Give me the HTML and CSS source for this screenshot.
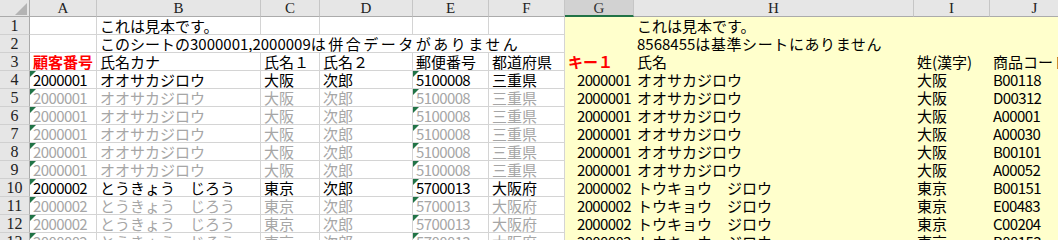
FILE: index.html
```html
<!DOCTYPE html>
<html lang="ja">
<head>
    <meta charset="utf-8">
    <title>Sheet</title>
    <link rel="stylesheet" href="styles.css">
</head>
<body>
    <div class="sheet">
        <!-- column headers -->
        <div class="corner">
            <svg width="30" height="16" viewBox="0 0 30 16"><polygon points="15,15 27,15 27,3" fill="#b4b4b4"/></svg>
        </div>
        <div class="ch">A</div>
        <div class="ch">B</div>
        <div class="ch">C</div>
        <div class="ch">D</div>
        <div class="ch">E</div>
        <div class="ch">F</div>
        <div class="ch sel">G</div>
        <div class="ch">H</div>
        <div class="ch">I</div>
        <div class="ch">J</div>

        <!-- 1 -->
        <div class="rh">1</div>
        <div class="c"></div>
        <div class="c">これは見本です。</div>
        <div class="c"></div><div class="c"></div><div class="c"></div><div class="c"></div>
        <div class="y"></div>
        <div class="y">これは見本です。</div>
        <div class="y"></div><div class="y"></div>

        <!-- 2 -->
        <div class="rh">2</div>
        <div class="c"></div>
        <div class="c span5">このシートの3000001,2000009<span class="wide">は併合データがありません</span></div>
        <div class="y"></div>
        <div class="y span2">8568455<span class="wide-s">は基準シートにありません</span></div>
        <div class="y"></div>

        <!-- 3 -->
        <div class="rh">3</div>
        <div class="c key">顧客番号</div>
        <div class="c">氏名カナ</div>
        <div class="c">氏名１</div>
        <div class="c">氏名２</div>
        <div class="c">郵便番号</div>
        <div class="c">都道府県</div>
        <div class="y key">キー１</div>
        <div class="y">氏名</div>
        <div class="y">姓(漢字)</div>
        <div class="y">商品コード</div>

        <!-- 4 -->
        <div class="rh">4</div>
        <div class="c t n">2000001</div>
        <div class="c">オオサカジロウ</div>
        <div class="c">大阪</div>
        <div class="c">次郎</div>
        <div class="c t n">5100008</div>
        <div class="c">三重県</div>
        <div class="y r n">2000001</div>
        <div class="y">オオサカジロウ</div>
        <div class="y">大阪</div>
        <div class="y n">B00118</div>

        <!-- 5 -->
        <div class="rh">5</div>
        <div class="c g t n">2000001</div>
        <div class="c g">オオサカジロウ</div>
        <div class="c g">大阪</div>
        <div class="c g">次郎</div>
        <div class="c g t n">5100008</div>
        <div class="c g">三重県</div>
        <div class="y r n">2000001</div>
        <div class="y">オオサカジロウ</div>
        <div class="y">大阪</div>
        <div class="y n">D00312</div>

        <!-- 6 -->
        <div class="rh">6</div>
        <div class="c g t n">2000001</div>
        <div class="c g">オオサカジロウ</div>
        <div class="c g">大阪</div>
        <div class="c g">次郎</div>
        <div class="c g t n">5100008</div>
        <div class="c g">三重県</div>
        <div class="y r n">2000001</div>
        <div class="y">オオサカジロウ</div>
        <div class="y">大阪</div>
        <div class="y n">A00001</div>

        <!-- 7 -->
        <div class="rh">7</div>
        <div class="c g t n">2000001</div>
        <div class="c g">オオサカジロウ</div>
        <div class="c g">大阪</div>
        <div class="c g">次郎</div>
        <div class="c g t n">5100008</div>
        <div class="c g">三重県</div>
        <div class="y r n">2000001</div>
        <div class="y">オオサカジロウ</div>
        <div class="y">大阪</div>
        <div class="y n">A00030</div>

        <!-- 8 -->
        <div class="rh">8</div>
        <div class="c g t n">2000001</div>
        <div class="c g">オオサカジロウ</div>
        <div class="c g">大阪</div>
        <div class="c g">次郎</div>
        <div class="c g t n">5100008</div>
        <div class="c g">三重県</div>
        <div class="y r n">2000001</div>
        <div class="y">オオサカジロウ</div>
        <div class="y">大阪</div>
        <div class="y n">B00101</div>

        <!-- 9 -->
        <div class="rh">9</div>
        <div class="c g t n">2000001</div>
        <div class="c g">オオサカジロウ</div>
        <div class="c g">大阪</div>
        <div class="c g">次郎</div>
        <div class="c g t n">5100008</div>
        <div class="c g">三重県</div>
        <div class="y r n">2000001</div>
        <div class="y">オオサカジロウ</div>
        <div class="y">大阪</div>
        <div class="y n">A00052</div>

        <!-- 10 -->
        <div class="rh">10</div>
        <div class="c t n">2000002</div>
        <div class="c">とうきょう　じろう</div>
        <div class="c">東京</div>
        <div class="c">次郎</div>
        <div class="c t n">5700013</div>
        <div class="c">大阪府</div>
        <div class="y r n">2000002</div>
        <div class="y">トウキョウ　ジロウ</div>
        <div class="y">東京</div>
        <div class="y n">B00151</div>

        <!-- 11 -->
        <div class="rh">11</div>
        <div class="c g t n">2000002</div>
        <div class="c g">とうきょう　じろう</div>
        <div class="c g">東京</div>
        <div class="c g">次郎</div>
        <div class="c g t n">5700013</div>
        <div class="c g">大阪府</div>
        <div class="y r n">2000002</div>
        <div class="y">トウキョウ　ジロウ</div>
        <div class="y">東京</div>
        <div class="y n">E00483</div>

        <!-- 12 -->
        <div class="rh">12</div>
        <div class="c g t n">2000002</div>
        <div class="c g">とうきょう　じろう</div>
        <div class="c g">東京</div>
        <div class="c g">次郎</div>
        <div class="c g t n">5700013</div>
        <div class="c g">大阪府</div>
        <div class="y r n">2000002</div>
        <div class="y">トウキョウ　ジロウ</div>
        <div class="y">東京</div>
        <div class="y n">C00204</div>

        <!-- 13 -->
        <div class="rh">13</div>
        <div class="c g t n">2000002</div>
        <div class="c g">とうきょう　じろう</div>
        <div class="c g">東京</div>
        <div class="c g">次郎</div>
        <div class="c g t n">5700013</div>
        <div class="c g">大阪府</div>
        <div class="y r n">2000002</div>
        <div class="y">トウキョウ　ジロウ</div>
        <div class="y">東京</div>
        <div class="y n">B00153</div>
    </div>
</body>
</html>
```

FILE: styles.css
```css
html, body {
    margin: 0;
    padding: 0;
    overflow: hidden;
    background-color: #fff;
}

.sheet {
    display: grid;
    grid-template-columns: 30px 67px 164px 59px 93px 76px 76px 69px 280px 76px 90px;
    grid-template-rows: 17px;
    grid-auto-rows: 18px;
    width: 1080px;
    font-family: "Noto Sans CJK JP", sans-serif;
    font-size: 15px;
    line-height: 17px;
    color: #000;
}

.sheet > div {
    box-sizing: border-box;
    white-space: nowrap;
    overflow: hidden;
}

/* headers */
.corner {
    background-color: #e6e6e6;
    border-right: 1px solid #ababab;
    border-bottom: 1px solid #ababab;
}

.corner svg {
    display: block;
}

.ch {
    background-color: #e6e6e6;
    border-right: 1px solid #c6c6c6;
    border-bottom: 1px solid #ababab;
    text-align: center;
    font-family: "Liberation Serif", serif;
    font-size: 15px;
    line-height: 17px;
    color: #222;
}

.ch.sel {
    background-color: #d2d2d2;
    border-bottom: 2px solid #217346;
    color: #333;
}

.rh {
    background-color: #e6e6e6;
    border-right: 1px solid #ababab;
    border-bottom: 1px solid #d0d0d0;
    text-align: center;
    font-family: "Liberation Serif", serif;
    font-size: 16px;
    color: #222;
}

/* cells */
.c {
    border-right: 1px solid #d4d4d4;
    border-bottom: 1px solid #d4d4d4;
    padding: 0 3px;
}

.y {
    background-color: #ffffcc;
    padding: 0 3px;
}

.span5 {
    grid-column: span 5;
}

.span2 {
    grid-column: span 2;
}

.wide {
    letter-spacing: 2.5px;
}

.wide-s {
    letter-spacing: 0.6px;
}

.g {
    color: #a6a6a6;
}

.r {
    text-align: right;
}

.n {
    letter-spacing: -0.6px;
}

.key {
    color: #ff0000;
    font-weight: bold;
}

.t {
    position: relative;
}

.t::before {
    content: "";
    position: absolute;
    left: 0;
    top: 0;
    border-top: 6px solid #217346;
    border-right: 6px solid transparent;
}
```
